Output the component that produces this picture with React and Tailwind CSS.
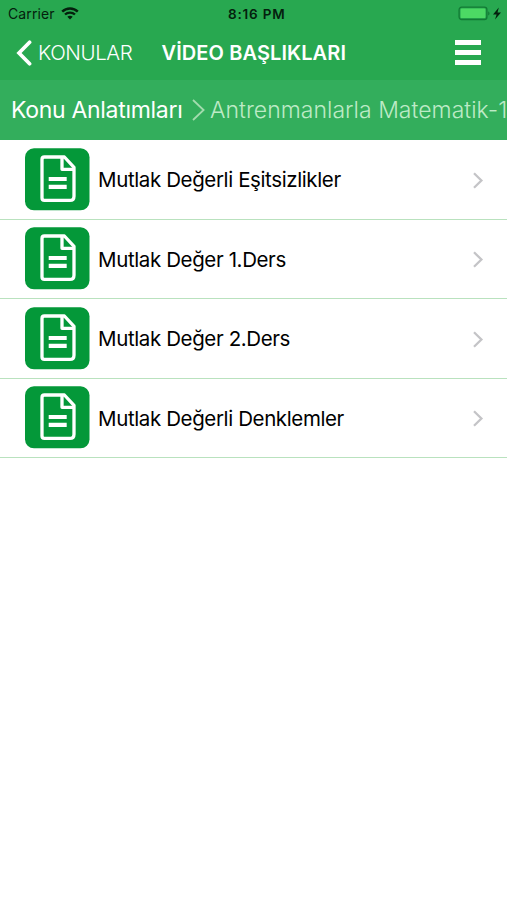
import React from 'react';

const videos = [
  { id: 1, title: 'Mutlak Değerli Eşitsizlikler' },
  { id: 2, title: 'Mutlak Değer 1.Ders' },
  { id: 3, title: 'Mutlak Değer 2.Ders' },
  { id: 4, title: 'Mutlak Değerli Denklemler' },
];

function WifiIcon() {
  return (
    <svg className="w-[18px] h-[13px] ml-[6px]" viewBox="0 0 18 13" fill="none" stroke="#04200d">
      <path d="M1.2 4.6C5.4 0.4 12.6 0.4 16.8 4.6" strokeWidth="2.4" />
      <path d="M4 7.5C6.7 4.9 11.3 4.9 14 7.5" strokeWidth="2.3" />
      <path d="M9 12.4L6.3 9.7C7.7 8.4 10.3 8.4 11.7 9.7Z" fill="#04200d" stroke="none" />
    </svg>
  );
}

function BatteryIcon() {
  return (
    <svg className="w-[45px] h-[16px]" viewBox="0 0 45 16">
      <rect x="1.1" y="1.1" width="27.8" height="12.4" rx="2.6" fill="#28a850" stroke="#127a34" strokeWidth="1.3" />
      <rect x="2.6" y="2.5" width="24.8" height="9.6" rx="1.2" fill="#4cd964" />
      <path d="M30.2 5.2C32 5.9 32 8.9 30.2 9.6Z" fill="#127a34" />
      <path d="M40.8 1.5L35 8.5H38.6L37 13.6L43 6.5H39.5Z" fill="#04200d" />
    </svg>
  );
}

function DocumentIcon() {
  return (
    <svg className="w-[65px] h-[63px] shrink-0" viewBox="0 0 65 63" fill="none">
      <rect x="0" y="0.3" width="64.5" height="62" rx="9" fill="#049839" />
      <g stroke="#fff" strokeWidth="3.3" strokeLinejoin="round">
        <path d="M19.4 9H39.4L49 19.4V48.2Q49 52.4 44.8 52.4H19.4Q17 52.4 17 50V11.4Q17 9 19.4 9Z" />
        <path d="M37 9V21.3H49" />
      </g>
      <path d="M23.7 31H41.7M23.7 38.8H41.7" stroke="#fff" strokeWidth="4.2" />
    </svg>
  );
}

function StatusBar() {
  return (
    <div className="h-[27px] flex items-center text-[#04200d]">
      <div className="w-[228px] pl-[8px] flex items-center text-[14px]">
        <span className="tracking-[0.1px]">Carrier</span>
        <WifiIcon />
      </div>
      <span className="flex-1 pt-px text-[13.5px] font-semibold tracking-[0.8px]">8:16 PM</span>
      <div className="w-[49px] flex shrink-0">
        <BatteryIcon />
      </div>
    </div>
  );
}

function NavBar() {
  return (
    <div className="h-[53px] pl-[16px] pr-[26px] pb-[2px] flex items-center text-white">
      <button className="w-[145.5px] flex items-center text-[20.5px] font-[350]">
        <svg className="w-[16px] h-[26px] mr-[6px]" viewBox="0 0 16 26" fill="none" stroke="#fff" strokeWidth="3.7" strokeLinecap="round">
          <path d="M13.6 2.2L3 13L13.6 23.8" />
        </svg>
        <span className="tracking-[-0.4px] pt-px">KONULAR</span>
      </button>
      <h1 className="flex-1 text-[20px] font-semibold whitespace-nowrap tracking-[0.1px]">VİDEO BAŞLIKLARI</h1>
      <button className="w-[26px] flex flex-col gap-[5.5px] shrink-0">
        <span className="w-full h-[4.5px] bg-white" />
        <span className="w-full h-[4.5px] bg-white" />
        <span className="w-full h-[4.5px] bg-white" />
      </button>
    </div>
  );
}

function Breadcrumb() {
  return (
    <div className="h-[60px] pl-[11px] flex items-center bg-[#33ae5c] text-[23px] whitespace-nowrap overflow-hidden">
      <span className="w-[181px] shrink-0 text-white tracking-[-0.3px]">Konu Anlatımları</span>
      <svg className="w-[13px] h-[22px] mr-[5px] shrink-0" viewBox="0 0 13 22" fill="none" stroke="#a3dcae" strokeWidth="1.8">
        <path d="M1 1L11.6 11L1 21" />
      </svg>
      <span className="font-[350] text-[#bdeac6] tracking-[0.02px]">Antrenmanlarla Matematik-1</span>
    </div>
  );
}

export default function App() {
  return (
    <div className="w-full h-[900px] bg-white overflow-hidden font-['Inter','Liberation_Sans',sans-serif]">
      <header className="bg-[#28a850]">
        <StatusBar />
        <NavBar />
        <Breadcrumb />
      </header>

      <ul>
        {videos.map((video) => (
          <li
            key={video.id}
            className="h-[79.5px] pl-[25px] pr-[23px] flex items-center border-b border-[#b9e2be]"
          >
            <DocumentIcon />
            <span className="flex-1 ml-[8px] mt-[3px] text-[20.5px] text-black tracking-[-0.38px]">{video.title}</span>
            <svg className="w-[12px] h-[17px] mt-[2px]" viewBox="0 0 12 17" fill="none" stroke="#c4c4c7" strokeWidth="2.3">
              <path d="M2 1.3L9.4 8.5L2 15.7" />
            </svg>
          </li>
        ))}
      </ul>
    </div>
  );
}
